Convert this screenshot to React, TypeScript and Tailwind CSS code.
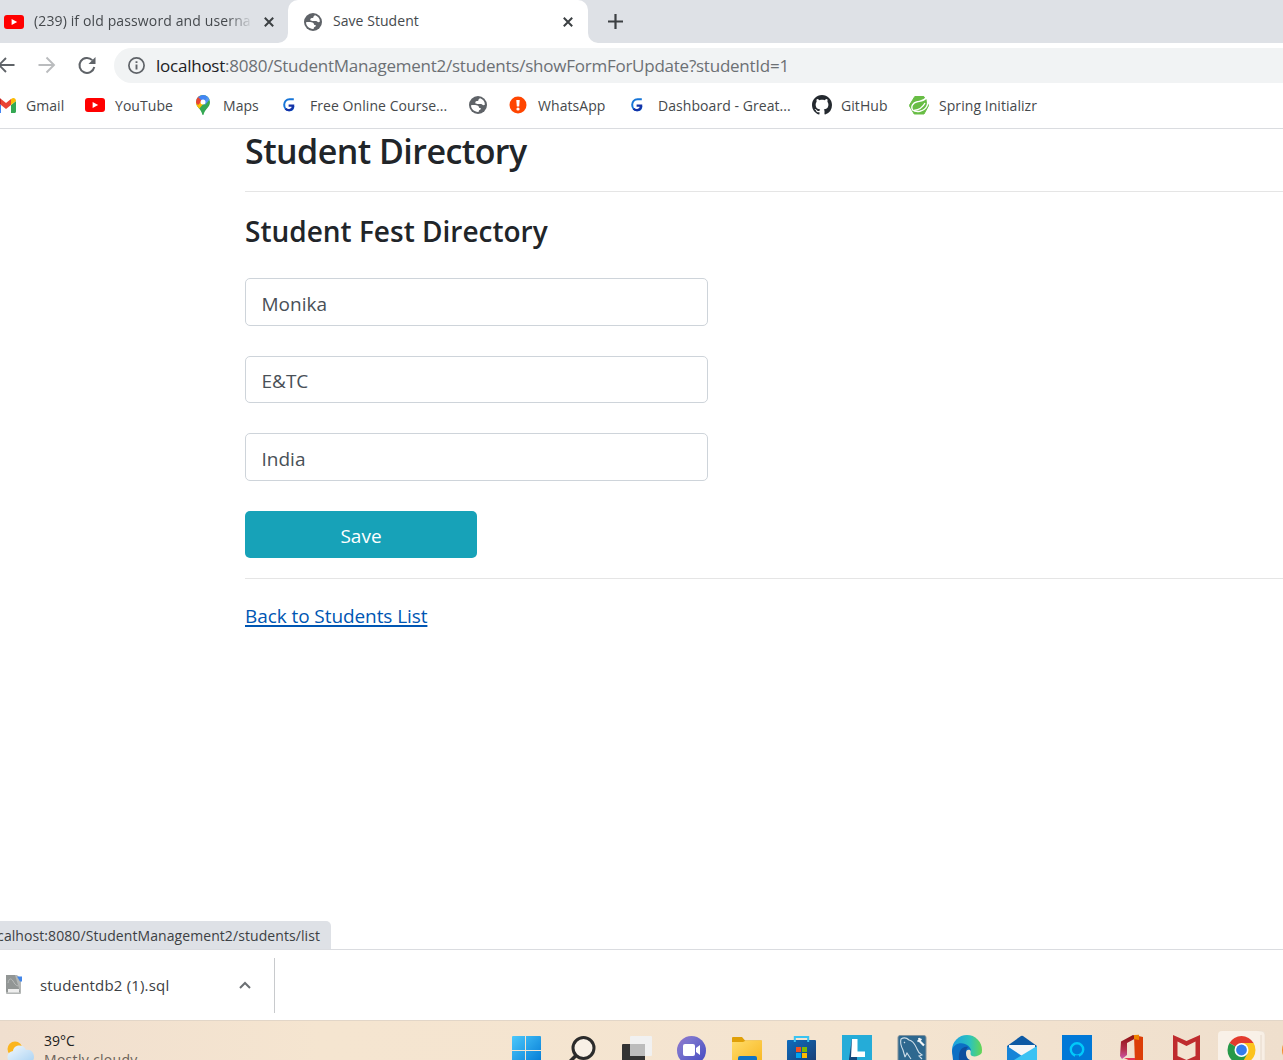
import type { ReactNode } from 'react';

function YouTube() {
  return (
    <svg width="20" height="14" viewBox="0 0 20 14" className="block shrink-0">
      <rect width="20" height="14" rx="3" fill="#f00" />
      <path d="M7.6 4v6l5.600-3z" fill="#fff" />
    </svg>
  );
}

function Globe() {
  return (
    <svg width="18" height="18" viewBox="0 0 18 18" className="block shrink-0">
      <circle cx="9" cy="9" r="9" fill="#5f6368" />
      <path d="M11.200 2.300c2.600.8 4.600 3.200 4.700 6.300-.8.700-1.900.8-2.800 0-.7-.7-1.500-.6-2.500-.6-1.800.1-3.500.2-4.100-.7-.6-1 .1-2.200 1.400-2.300 1.100-.1 1.500-.3 1.600-1.100.1-.8.700-1.200 1.700-1.600z" fill="#fff" />
      <path d="M2 9.300c1.500-.3 4-.3 5.400-.1 1.600.2 2.400.9 2.600 2 .1.600.5.800 1.200.9.900.2.900 1.400-.1 1.700-1 .3-1.300.8-1.500 2.100-4 .3-7.500-2.600-7.600-6.600z" fill="#fff" />
    </svg>
  );
}

function Close() {
  return (
    <svg width="10" height="10" viewBox="0 0 10 10" className="block shrink-0">
      <path d="M.8.8l8.400 8.400M9.200.8L.8 9.200" stroke="#3c4043" strokeWidth="2" fill="none" />
    </svg>
  );
}

function GreatLearning() {
  return (
    <svg width="12" height="14" viewBox="0 0 12 14" className="block shrink-0">
      <path d="M10.800 1.300H6.600C3.300 1.300 1.200 3.600 1.200 6.700c0 3.200 2 5.600 5 5.600 2.500 0 4.200-1.700 4.200-4.400" fill="none" stroke="#1675d8" strokeWidth="2" />
      <path d="M2.500 10.800c2.600 2.600 7.500 1.200 7.600-3.200H5.600" fill="none" stroke="#1433a8" strokeWidth="2.300" />
    </svg>
  );
}

function Gmail() {
  return (
    <svg width="20" height="15" viewBox="0 0 20 15" className="-ml-1 block shrink-0">
      <path d="M0 3v10.500c0 .8.600 1.500 1.500 1.500H5V7z" fill="#4285f4" />
      <path d="M15 7v8h3.500c.9 0 1.500-.7 1.500-1.500V3z" fill="#34a853" />
      <path d="M5 1v6l5 4 5-4V1l-5 4z" fill="#ea4335" />
      <path d="M15 1v6l5-4c0-2.500-2.500-3.700-4.500-2.300z" fill="#fbbc04" />
      <path d="M0 3l5 4V1C3-.8 0 .5 0 3z" fill="#c5221f" />
    </svg>
  );
}

function Maps() {
  return (
    <svg width="14" height="20" viewBox="0 0 14 20" className="block shrink-0">
      <clipPath id="pin"><path d="M7 0a7 7 0 0 0-7 7c0 3 1.500 4.500 3.300 6.700C5 16 5.800 17.500 6.300 19.500q.7 1 1.300 0c.5-2 1.300-3.500 3.200-5.800C12.600 11.500 14 10 14 7a7 7 0 0 0-7-7z" /></clipPath>
      <g clipPath="url(#pin)">
        <rect width="14" height="20" fill="#34a853" />
        <path d="M0 13V7l3-3.500L8 8l-5 6z" fill="#fbbc04" />
        <path d="M0 8V0h3l4 5-5 5z" fill="#ea4335" />
        <path d="M2 2l5 5 6-6-6-2z" fill="#4285f4" />
        <path d="M7 7l5-5.500L14 4 9 10z" fill="#5294f5" />
      </g>
      <circle cx="7" cy="7" r="2.500" fill="#fff" />
    </svg>
  );
}

function Alert() {
  return (
    <svg width="18" height="18" viewBox="0 0 18 18" className="block shrink-0">
      <circle cx="9" cy="9" r="8.500" fill="#ff4500" />
      <path d="M7.300 4h3.400l-.5 6.500H7.800z" fill="#fff" />
      <circle cx="9" cy="13" r="1.600" fill="#fff" />
    </svg>
  );
}

function GitHub() {
  return (
    <svg width="20" height="20" viewBox="0 0 16 16" className="block shrink-0">
      <path
        fill="#24292f"
        d="M8 0C3.580 0 0 3.580 0 8c0 3.540 2.290 6.530 5.470 7.590.4.070.55-.17.55-.38 0-.19-.01-.82-.01-1.490-2.010.37-2.530-.49-2.690-.94-.09-.23-.48-.94-.82-1.130-.28-.15-.68-.52-.01-.53.63-.01 1.080.58 1.230.82.72 1.210 1.870.87 2.330.66.07-.52.28-.87.51-1.070-1.780-.2-3.640-.89-3.640-3.950 0-.87.31-1.590.82-2.150-.08-.2-.36-1.020.08-2.120 0 0 .67-.21 2.200.82.64-.18 1.320-.27 2-.27s1.360.09 2 .27c1.530-1.040 2.200-.82 2.200-.82.44 1.100.16 1.920.08 2.120.51.56.82 1.270.82 2.150 0 3.070-1.870 3.750-3.650 3.950.29.25.54.73.54 1.480 0 1.070-.01 1.930-.01 2.200 0 .21.15.46.55.38A8.010 8.010 0 0 0 16 8c0-4.420-3.580-8-8-8z"
      />
    </svg>
  );
}

function Spring() {
  return (
    <svg width="20" height="19" viewBox="0 0 20 19" className="block shrink-0">
      <path d="M5.800.5h9L19.600 9.500 15 18H5.200L.3 9.500z" fill="#68bd45" stroke="#68bd45" strokeLinejoin="round" />
      <path d="M17.500 1.500c3 7-.4 12.500-6.500 13.700-2.900.5-5.300.3-7.400-1.200C1.500 10.500 4 6.500 8 5.800c4.500-.9 6.800-.5 9.500-4.300z" fill="#68bd45" stroke="#fff" strokeWidth="1.400" />
      <path d="M5 14.500c5.500-.8 9-3.500 11-7.500" fill="none" stroke="#fff" strokeWidth="1.300" />
    </svg>
  );
}

function Bookmark({ icon, label, className }: { icon: ReactNode; label?: string; className: string }) {
  return (
    <div className={'flex shrink-0 items-center whitespace-nowrap ' + className}>
      {icon}
      {label && <span>{label}</span>}
    </div>
  );
}

function TabStrip() {
  return (
    <div className="flex h-[43px] shrink-0 bg-[#dee1e6] text-[14px] text-[#45494d]">
      <div className="flex w-[288px] shrink-0 items-center rounded-br-[10px] pl-1">
        <YouTube />
        <div className="mb-[2px] ml-[10px] w-[219px] overflow-hidden whitespace-nowrap tracking-[0.13px] [mask-image:linear-gradient(to_right,#000_88%,transparent_100%)]">
          (239) if old password and userna
        </div>
        <div className="ml-[11px]"><Close /></div>
      </div>
      <div className="relative flex w-[300px] shrink-0 items-center rounded-t-[10px] bg-white pl-4">
        <svg width="320" height="10" viewBox="0 0 320 10" className="absolute bottom-0 -left-[10px]">
          <path d="M0 10A10 10 0 0 0 10 0V10zM310 0a10 10 0 0 0 10 10H310z" fill="#fff" />
        </svg>
        <Globe />
        <span className="mb-[2px] ml-[11px] w-[219px] tracking-[0.05px]">Save Student</span>
        <div className="ml-[11px]"><Close /></div>
      </div>
      <svg width="15" height="15" viewBox="0 0 15 15" className="mt-[14px] ml-[20px]">
        <path d="M7.500 0v15M0 7.500h15" stroke="#3c4043" strokeWidth="2.200" />
      </svg>
    </div>
  );
}

function Toolbar() {
  return (
    <div className="flex h-[45px] shrink-0 items-center">
      <svg width="114" height="24" viewBox="0 0 114 24" fill="none" className="mb-[2px] shrink-0">
        <path d="M14.500 12H-1M6 5l-7 7 7 7" stroke="#5f6368" strokeWidth="1.900" />
        <path d="M38.500 12h15M46.500 4.500l7.500 7.500-7.500 7.500" stroke="#babcbe" strokeWidth="1.900" />
        <path d="M92.300 7.100a7.500 7.500 0 1 0 2 6.900" stroke="#5f6368" strokeWidth="2" />
        <path d="M95.500 4v7h-7z" fill="#5f6368" />
      </svg>
      <div className="flex h-[35px] grow items-center rounded-l-full bg-[#f1f3f4] pl-[14px]">
        <svg width="17" height="17" viewBox="0 0 17 17" fill="none">
          <circle cx="8.500" cy="8.500" r="7.600" stroke="#5f6368" strokeWidth="1.700" />
          <path d="M8.500 7.500v5M8.500 4.300v1.800" stroke="#5f6368" strokeWidth="1.900" />
        </svg>
        <div className="ml-[11px] text-[17px] tracking-[-0.24px] whitespace-nowrap text-[#6c7074]">
          <span className="text-[#202124]">localhost</span>:8080/StudentManagement2/students/showFormForUpdate?studentId=1
        </div>
      </div>
    </div>
  );
}

function Bookmarks() {
  return (
    <div className="flex h-[41px] shrink-0 items-center border-b border-[#dadce0] pb-[6px] text-[14px] tracking-[0.06px] text-[#45494c]">
      <Bookmark className="w-[85px] gap-[10px]" icon={<Gmail />} label="Gmail" />
      <Bookmark className="w-[111px] gap-[10px]" icon={<YouTube />} label="YouTube" />
      <Bookmark className="w-[87px] gap-[13px]" icon={<Maps />} label="Maps" />
      <Bookmark className="w-[186px] gap-[15px]" icon={<GreatLearning />} label="Free Online Course..." />
      <Bookmark className="w-[40px]" icon={<Globe />} />
      <Bookmark className="w-[122px] gap-[11px]" icon={<Alert />} label="WhatsApp" />
      <Bookmark className="w-[181px] gap-[15px]" icon={<GreatLearning />} label="Dashboard - Great..." />
      <Bookmark className="w-[97px] gap-[9px]" icon={<GitHub />} label="GitHub" />
      <Bookmark className="gap-[10px]" icon={<Spring />} label="Spring Initializr" />
    </div>
  );
}

function Field({ value }: { value: string }) {
  return (
    <div className="mb-[30px] flex h-[47.5px] w-[463px] items-center rounded-[5px] border border-[#ced4da] px-[15.5px] pt-[4px] text-[19px] text-[#495057]">
      {value}
    </div>
  );
}

function Page() {
  return (
    <main className="flex grow flex-col pl-[245px] text-[#212529]">
      <h1 className="h-[62px] text-[34px] leading-[44px] font-semibold tracking-[-0.55px]">Student Directory</h1>
      <hr className="border-[#e5e5e5]" />
      <h2 className="mt-[19px] h-[67px] text-[28px] leading-[40px] font-semibold">Student Fest Directory</h2>
      <Field value="Monika" />
      <Field value="E&TC" />
      <Field value="India" />
      <button className="h-[47px] w-[232px] rounded-[5px] bg-[#17a2b8] pt-[4px] text-[19px] text-white">Save</button>
      <hr className="mt-5 border-[#e5e5e5]" />
      <a className="mt-[22px] self-start text-[19px] leading-[30px] tracking-[-0.08px] text-[#0056b3] underline decoration-[1.500px] underline-offset-[2px]">
        Back to Students List
      </a>
      <div className="mt-auto -ml-[245px] flex h-[28px] w-[331px] items-center justify-end overflow-hidden rounded-tr-[5px] bg-[#dee1e6] pr-[11px] text-[14px] tracking-[0.08px] whitespace-nowrap text-[#3c4043]">
        calhost:8080/StudentManagement2/students/list
      </div>
    </main>
  );
}

function Downloads() {
  return (
    <div className="flex h-[71px] shrink-0 items-center border-t border-[#dadce0]">
      <div className="flex h-[55px] w-[275px] items-center border-r border-[#c8cacd] pl-[5px]">
        <svg width="18" height="20" viewBox="0 0 18 20" className="shrink-0">
          <path d="M1 0h11l4 4v14q0 1-1 1H2q-1 0-1-1z" fill="#b3b6b5" />
          <path d="M1 0h9l5 17H2q-1 0-1-1z" fill="#929695" />
          <path d="M12 1.500h5v5h-2z" fill="#4386e8" />
          <path d="M3 8c1-5 3-5 5-2s2 4 5 5" stroke="#b9bcbb" fill="none" />
          <rect x="3" y="14" width="11" height="3.500" fill="#eee" />
        </svg>
        <span className="ml-[17px] w-[200px] text-[15px] tracking-[0.18px] text-[#3c4043]">studentdb2 (1).sql</span>
        <svg width="12" height="8" viewBox="0 0 12 8" className="-ml-px shrink-0">
          <path d="M1 7l5-5 5 5" fill="none" stroke="#6b6f73" strokeWidth="2" />
        </svg>
      </div>
    </div>
  );
}

function TaskIcon({ children }: { children: ReactNode }) {
  return (
    <svg width="55" height="40" viewBox="0 0 55 40" className="block shrink-0">
      {children}
    </svg>
  );
}

function Taskbar() {
  return (
    <div className="flex h-[40px] shrink-0 overflow-hidden bg-[linear-gradient(90deg,#f0dfcf,#f5e5d0_25%,#f4e4d0_70%,#efdfcd)] shadow-[inset_0_1px_0_#e2d6c8]">
      <div className="flex w-[499px] shrink-0">
        <svg width="44" height="40" viewBox="0 0 44 40" className="shrink-0">
          <defs>
            <linearGradient id="cloud" x2="1" y2="1"><stop stopColor="#f3f8fc" /><stop offset="1" stopColor="#a9d2f3" /></linearGradient>
          </defs>
          <circle cx="15" cy="29" r="7.500" fill="#fbb51f" />
          <path d="M14 43a6 6 0 0 1-1-12c1-7 11-7 13-1 5-1 8 3 8 7s-3 6-7 6z" fill="url(#cloud)" />
        </svg>
        <div className="mt-[11px] text-[14px] leading-[19px]">
          <div className="text-[#202020]">39°C</div>
          <div className="tracking-[0.3px] text-[#6b6259]">Mostly cloudy</div>
        </div>
      </div>
      <TaskIcon>
        <defs>
          <linearGradient id="win" x2="1" y2="1"><stop stopColor="#4cc8fb" /><stop offset="1" stopColor="#0078d4" /></linearGradient>
        </defs>
        <path d="M13 17q0-1 1-1h12v14H13zM27 16h14q1 0 1 1v13H27zM13 31h13v14H13zM27 31h15v14H27z" fill="url(#win)" />
      </TaskIcon>
      <TaskIcon>
        <circle cx="29.500" cy="28" r="10.500" fill="#f8f0e6" stroke="#2b2b2b" strokeWidth="3" />
        <path d="M22.500 35l-8 8" stroke="#2b2b2b" strokeWidth="3.500" />
      </TaskIcon>
      <TaskIcon>
        <rect x="13" y="24" width="23" height="20" rx="1" fill="#333" />
        <rect x="21" y="16" width="22" height="20" rx="1" fill="#f1f1f1" />
        <path d="M21 24h15v12H21z" fill="#bcbcbc" />
      </TaskIcon>
      <TaskIcon>
        <defs>
          <linearGradient id="chat" x1="0" x2="1" y2="1"><stop stopColor="#9270c8" /><stop offset=".3" stopColor="#7a74ce" /><stop offset="1" stopColor="#4148c0" /></linearGradient>
        </defs>
        <circle cx="27.500" cy="30.500" r="14.500" fill="url(#chat)" />
        <rect x="19" y="24" width="12" height="12" rx="2" fill="#fff" />
        <path d="M32 28l4-3v10l-4-3z" fill="#fff" />
      </TaskIcon>
      <TaskIcon>
        <defs>
          <linearGradient id="folder" x2="1" y2="1"><stop stopColor="#ffdc6a" /><stop offset="1" stopColor="#f8b620" /></linearGradient>
        </defs>
        <path d="M13 18q0-1 1-1h9l3 3.500H42q1 0 1 1V44H13z" fill="#e0a008" />
        <path d="M13 22h11l3-1.500h16V44H13z" fill="url(#folder)" />
        <path d="M19 40v-2q0-2 2-2h15q2 0 2 2v2z" fill="#1273c4" />
      </TaskIcon>
      <TaskIcon>
        <defs>
          <linearGradient id="store" x2="1" y2="1"><stop stopColor="#0f6cbd" /><stop offset="1" stopColor="#193b70" /></linearGradient>
        </defs>
        <path d="M13 21q0-1 1-1h27q1 0 1 1v24H13z" fill="url(#store)" />
        <path d="M20.800 22v-5h13.400v5" fill="none" stroke="#3ac4f2" strokeWidth="2" />
        <path d="M22 27h5v5h-5z" fill="#f25022" />
        <path d="M28 27h5v5h-5z" fill="#7fba00" />
        <path d="M22 33h5v5h-5z" fill="#00a4ef" />
        <path d="M28 33h5v5h-5z" fill="#ffb900" />
      </TaskIcon>
      <TaskIcon>
        <path d="M13 15h30v30H13z" fill="#25acd8" />
        <path d="M23 18.500l-3 20.500v5h8v-7z" fill="#12477c" />
        <path d="M23 19h5.500v12.500H36V37H22z" fill="#fff" />
      </TaskIcon>
      <TaskIcon>
        <rect x="14" y="15.500" width="28" height="30" rx="2" fill="#2e688f" stroke="#82929c" />
        <path d="M21 37l-2-7c-2-4-3-8-2-11 3-2 6-1 8 1 5 1 6 5 8 9 1 3 3 5 5 6l-3 1 3 3M21 37l2-4 4 6M20 22l1 1" fill="none" stroke="#d0dfe9" strokeWidth="1.100" />
        <path d="M35 18l1 3.500 4 4" stroke="#f2f5f7" strokeWidth="2.200" fill="none" />
        <path d="M33.500 21.500l4-2.500" stroke="#f2f5f7" strokeWidth="2" />
      </TaskIcon>
      <TaskIcon>
        <defs>
          <linearGradient id="edge" x2="1"><stop stopColor="#1b9de2" /><stop offset=".6" stopColor="#2cc3bd" /><stop offset="1" stopColor="#65d652" /></linearGradient>
        </defs>
        <circle cx="28" cy="30" r="15" fill="url(#edge)" />
        <path d="M13 31c1-7 8-9 13-7 3 1 5 3 6 6l-3 10H14z" fill="#0c6fc4" />
        <path d="M20 40c-1-9 3-14 9-13-2 2-2 4-2 6 0 4 3 7 7 7z" fill="#104f9e" />
        <path d="M27 33c0-3 2-4 4-3 2 2-1 4 2 6 3 1 7 0 10-3v7H31c-3-1-4-4-4-7z" fill="#f4e4d0" />
      </TaskIcon>
      <TaskIcon>
        <path d="M13 26l14-10q1-.6 2 0l14 10v19H13z" fill="#0c59a4" />
        <path d="M15 25h26v15H15z" fill="#f5f5f5" />
        <path d="M13 26l15 10 6 8H13z" fill="#1684d8" />
        <path d="M43 26L20 40h23z" fill="#3ac2f3" />
      </TaskIcon>
      <TaskIcon>
        <path d="M13 15h30v30H13z" fill="#0078d7" />
        <circle cx="28" cy="29.500" r="6.200" fill="none" stroke="#00cafa" strokeWidth="2.400" />
        <path d="M26 36.500h4" stroke="#0078d7" strokeWidth="2.500" />
      </TaskIcon>
      <TaskIcon>
        <defs>
          <linearGradient id="office" x2="0" y2="1"><stop stopColor="#8d1010" /><stop offset=".6" stopColor="#b5304c" /><stop offset="1" stopColor="#cc59ac" /></linearGradient>
        </defs>
        <path d="M17 21.500L29 15l5 2-11 6v12l-5 4-2-3z" fill="url(#office)" />
        <path d="M30 15l9 2v26l-8 1z" fill="#dc3e08" />
        <path d="M30 15l5-.300V20l-5-1z" fill="#f08300" />
        <path d="M20 38h11v5z" fill="#e63353" />
      </TaskIcon>
      <TaskIcon>
        <path d="M14 15l13.500 6L41 15v30H14z" fill="#bf2b2d" />
        <path d="M18.500 21.500l9 4.500 9-4.500V36l-9 4-9-4z" fill="#f3e3d0" />
      </TaskIcon>
      <TaskIcon>
        <path d="M43 11h4q4 0 4 4v29H43z" fill="#f8efe5" stroke="#e8dccf" strokeWidth=".6" />
        <path d="M4 45V15q0-4 4-4h35q4 0 4 4v30z" fill="#f9f1e8" />
        <path d="M47 15v25" stroke="#e5d8ca" />
        <path d="M27.500 30L15.400 23a14 14 0 0 1 24.200 0z" fill="#e33b2e" />
        <path d="M27.500 30V23h12.100A14 14 0 0 1 27.500 44z" fill="#fcc31e" />
        <path d="M27.500 30l6 3.500L27.500 44a14 14 0 0 1-12.100-21z" fill="#27994a" />
        <circle cx="27.500" cy="30" r="7" fill="#fff" />
        <circle cx="27.500" cy="30" r="5.400" fill="#347cec" />
      </TaskIcon>
      <svg width="14" height="40" viewBox="0 0 14 40" className="shrink-0"><circle cx="27" cy="30" r="14" fill="#f48c26" /></svg>
    </div>
  );
}

export default function App() {
  return (
    <div className="flex h-[1060px] w-[1283px] flex-col overflow-hidden bg-white font-['Open_Sans',sans-serif]">
      <TabStrip />
      <Toolbar />
      <Bookmarks />
      <Page />
      <Downloads />
      <Taskbar />
    </div>
  );
}
